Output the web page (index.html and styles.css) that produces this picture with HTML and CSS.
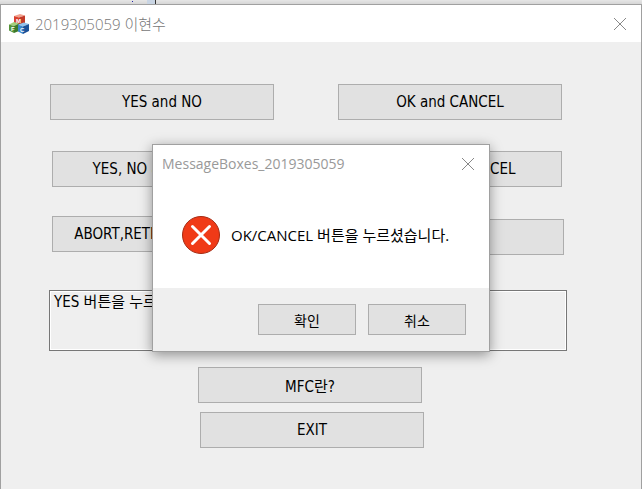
FILE: index.html
```html
<!DOCTYPE html>
<html lang="ko">
<head>
<meta charset="utf-8">
<title>2019305059 이현수</title>
<link rel="stylesheet" href="styles.css">
</head>
<body>
<div class="backdrop" aria-hidden="true"><span class="backdrop-dot"></span><span class="backdrop-tab"></span></div>
<main class="window">
  <header class="titlebar">
    <svg class="app-icon" viewBox="0 0 20 20" aria-hidden="true">
      <path d="M5 2 11 0l5 1.500-6 2z" fill="#f2a08c"/>
      <path d="M5 2 10 3.500v7.500l-5-2z" fill="#d9402e"/>
      <path d="M10 3.500l6-2v7.500l-6 2z" fill="#c23a28"/>
      <path d="M0 10.500 5 8l5 1.500L5 12z" fill="#a4cf7c"/>
      <path d="M0 10.500 5 12v7l-5-2.500z" fill="#56933a"/>
      <path d="M5 12l5-2.500V17l-5 2z" fill="#3c7a2b"/>
      <path d="M9 10.500 15 8.500l5 1.500-6 2.500z" fill="#94c4ec"/>
      <path d="M9 10.500l5 2V20l-5-2.500z" fill="#3d86cc"/>
      <path d="M14 12.500 20 10v7l-6 3z" fill="#1b5299"/>
      <g class="app-icon-letters"><text x="7" y="9">M</text><text x="2" y="17">F</text><text x="11" y="18">C</text></g>
    </svg>
    <h1 class="title">2019305059 이현수</h1>
    <button class="close" type="button" aria-label="닫기"><svg viewBox="0 0 12 12" aria-hidden="true"><path d="M0 0 12 12M12 0 0 12"/></svg></button>
  </header>
  <div class="client">
    <div class="row row-first">
      <button class="btn" type="button">YES and NO</button>
      <button class="btn" type="button">OK and CANCEL</button>
    </div>
    <div class="row row-second">
      <button class="btn" type="button">YES, NO and CANCEL</button>
      <button class="btn" type="button">RETRY and CANCEL</button>
    </div>
    <div class="row row-third">
      <button class="btn" type="button">ABORT,RETRY and IGNORE</button>
      <button class="btn" type="button">HELP</button>
    </div>
    <textarea class="output" aria-label="결과" readonly>YES 버튼을 누르셨습니다.</textarea>
    <div class="actions">
      <button class="btn" type="button">MFC란?</button>
      <button class="btn btn-exit" type="button">EXIT</button>
    </div>
  </div>
</main>
<div class="overlay">
  <section class="dialog" role="alertdialog" aria-labelledby="dialog-title" aria-describedby="dialog-message">
    <header class="titlebar dialog-titlebar">
      <h2 class="title dialog-title" id="dialog-title">MessageBoxes_2019305059</h2>
      <button class="close" type="button" aria-label="닫기"><svg viewBox="0 0 12 12" aria-hidden="true"><path d="M0 0 12 12M12 0 0 12"/></svg></button>
    </header>
    <div class="dialog-body">
      <svg class="error-icon" viewBox="0 0 38 38" aria-hidden="true">
        <circle cx="19" cy="19" r="18.500" fill="#f03a17" stroke="#a52a12"/>
        <path d="M10.500 10.500 27.500 27.500M27.500 10.500 10.500 27.500" stroke="#fff" stroke-width="3" stroke-linecap="round"/>
      </svg>
      <p class="message" id="dialog-message">OK/CANCEL 버튼을 누르셨습니다.</p>
    </div>
    <footer class="dialog-footer">
      <button class="btn btn-small" type="button">확인</button>
      <button class="btn btn-small" type="button">취소</button>
    </footer>
  </section>
</div>
</body>
</html>
```
FILE: styles.css
```css
* { box-sizing: border-box; }

body {
  margin: 0;
  min-height: 100vh;
  display: flex;
  flex-direction: column;
  overflow: hidden;
  background: #efefef;
  color: #000;
  font-family: "DejaVu Sans Condensed", "Noto Sans CJK KR", sans-serif;
  font-size: 15px;
}

.backdrop {
  display: flex;
  height: 4px;
  padding-left: 132px;
  gap: 14px;
  background: linear-gradient(#e6e6e6, #d6d6d6);
}
.backdrop-dot { width: 1px; height: 1px; margin-top: 1px; background: #22a; }
.backdrop-tab { width: 9px; background: #c9d5e4; border-right: 1px solid #333; }

.window {
  flex: 1;
  display: flex;
  flex-direction: column;
  border: 1px solid #a0a0a0;
  border-bottom: 0;
}

.titlebar {
  display: flex;
  align-items: center;
  height: 37px;
  padding: 0 15px 0 8px;
  background: #fff;
}
.app-icon { width: 20px; height: 20px; margin-right: 6px; }
.app-icon-letters { fill: #fff; font: bold 6px "Liberation Sans", sans-serif; }
.title {
  flex: 1;
  margin: 0;
  color: #777;
  font-family: "Open Sans", "Noto Sans CJK KR", sans-serif;
  font-size: 15px;
  font-weight: 300;
  line-height: 20px;
}
.dialog-title { color: #999; font-size: 14px; font-weight: 400; }
.close {
  display: flex;
  padding: 0;
  border: 0;
  background: none;
}
.close svg { width: 12px; height: 12px; fill: none; stroke: #888; }

.client { padding: 42px 74px 0 48px; }

.row {
  display: grid;
  grid-template-columns: 1fr 1fr;
  column-gap: 64px;
}
.row-first { padding: 0 5px 0 1px; margin-bottom: 31px; }
.row-second { padding: 0 5px 0 3px; margin-bottom: 29px; column-gap: 62px; }
.row-third { padding: 0 3px; height: 39px; margin-bottom: 35px; }
.row-third .btn:last-child { align-self: end; }

.btn {
  height: 36px;
  padding: 0;
  border: 1px solid #adadad;
  background: #e1e1e1;
  color: #000;
  font: inherit;
  white-space: nowrap;
}

.output {
  display: block;
  width: 100%;
  height: 61px;
  padding: 1px 4px;
  border: 1px solid #777;
  outline: 0;
  background: #efefef;
  box-shadow: inset 0 0 0 1px #fff;
  color: #000;
  font: inherit;
  line-height: 20px;
  resize: none;
}

.actions {
  display: grid;
  grid-template-columns: 224px;
  justify-content: center;
  gap: 9px;
  margin-top: 16px;
  padding-left: 4px;
}
.btn-exit { position: relative; left: 2px; }

.overlay {
  position: absolute;
  inset: 0;
  display: flex;
  justify-content: center;
  align-items: flex-start;
  padding-top: 144px;
}
.dialog {
  width: 338px;
  border: 1px solid #a0a0a0;
  background: #fff;
  box-shadow: 0 3px 12px rgba(0, 0, 0, .4);
}
.dialog-titlebar { padding-left: 9px; }
.dialog-body {
  display: flex;
  align-items: center;
  gap: 11px;
  height: 106px;
  padding-left: 29px;
}
.error-icon { width: 38px; height: 38px; }
.message {
  margin: 0;
  font-family: "Open Sans", "Noto Sans CJK KR", sans-serif;
  font-size: 15px;
  line-height: 20px;
}
.dialog-footer {
  display: flex;
  justify-content: flex-end;
  gap: 12px;
  padding: 16px 23px 16px 0;
  background: #efefef;
}
.btn-small { width: 98px; height: 31px; font-size: 14px; }
```
